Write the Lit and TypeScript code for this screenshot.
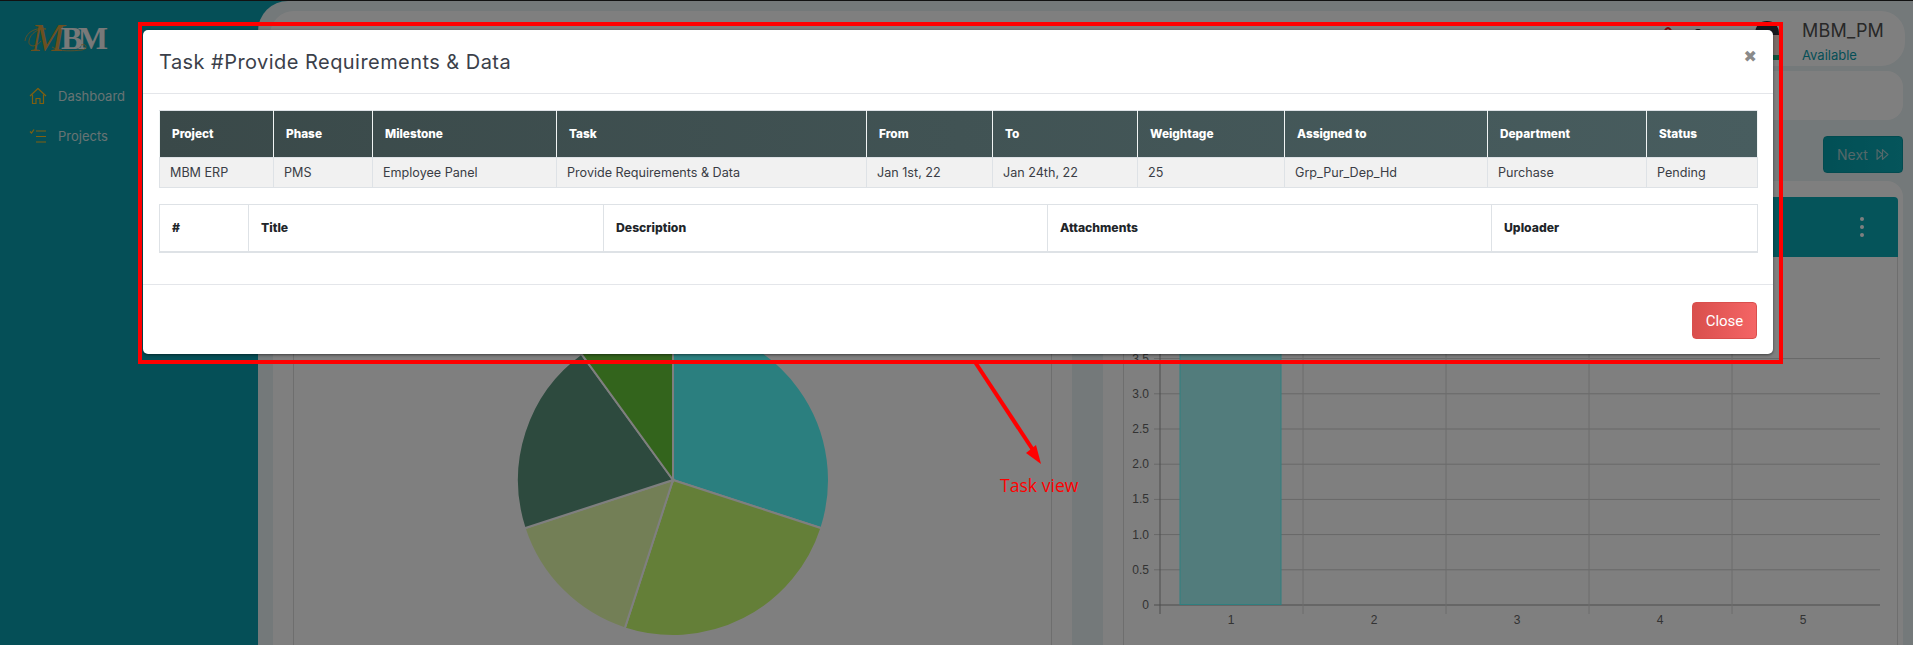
import { LitElement, html, css, svg } from 'lit';
import { customElement } from 'lit/decorators.js';

const TASK_COLS = ['Project', 'Phase', 'Milestone', 'Task', 'From', 'To', 'Weightage', 'Assigned to', 'Department', 'Status'];
const TASK_ROW = ['MBM ERP', 'PMS', 'Employee Panel', 'Provide Requirements & Data', 'Jan 1st, 22', 'Jan 24th, 22', '25', 'Grp_Pur_Dep_Hd', 'Purchase', 'Pending'];
const FILE_COLS = ['#', 'Title', 'Description', 'Attachments', 'Uploader'];

// share of the pie in percent, clockwise from 12 o'clock
const PIE = [
  { pct: 30, color: '#57ffff' },
  { pct: 25, color: '#c9ff70' },
  { pct: 15, color: '#e7ffad' },
  { pct: 20, color: '#5b957d' },
  { pct: 10, color: '#67c938' },
];

const Y_TICKS = [0, 0.5, 1, 1.5, 2, 2.5, 3, 3.5];
const X_TICKS = [1, 2, 3, 4, 5];
const ZERO_Y = 605;
const UNIT_Y = 70.4;
const AXIS_X = 1160;
const STEP_X = 143;

function piePaths(cx: number, cy: number, r: number) {
  let start = 0;
  return PIE.map((s) => {
    const end = start + (s.pct / 100) * Math.PI * 2;
    const x1 = cx + r * Math.sin(start);
    const y1 = cy - r * Math.cos(start);
    const x2 = cx + r * Math.sin(end);
    const y2 = cy - r * Math.cos(end);
    const large = end - start > Math.PI ? 1 : 0;
    start = end;
    return svg`<path d="M${cx} ${cy}L${x1} ${y1}A${r} ${r} 0 ${large} 1 ${x2} ${y2}Z" fill=${s.color} stroke="#fff" stroke-width="2" />`;
  });
}

@customElement('app-root')
export class AppRoot extends LitElement {
  static styles = css`
    :host {
      display: block;
      position: relative;
      width: 1913px;
      height: 645px;
      overflow: hidden;
      font-family: Inter, 'Liberation Sans', sans-serif;
      background: #0a9eae;
    }

    .page {
      display: flex;
      height: 645px;
      border-top: 1px solid #222;
      box-sizing: border-box;
    }

    .sidebar {
      width: 258px;
      flex-shrink: 0;
      padding: 24px 0 0 24px;
      box-sizing: border-box;
    }

    .logo {
      display: flex;
      align-items: center;
      height: 26px;
      position: relative;
      font-family: 'Liberation Serif', serif;
      line-height: 26px;
    }

    .logo-script {
      font-style: italic;
      font-size: 40px;
      color: #d9a040;
      width: 37px;
      padding-left: 7px;
      box-sizing: border-box;
    }

    .logo-solid {
      font-weight: 700;
      font-size: 32px;
      letter-spacing: -4.5px;
      color: #f2f2f2;
    }

    .logo-swirl {
      position: absolute;
      left: 0;
      top: 0;
      width: 82px;
      height: 28px;
    }

    .nav {
      margin-top: 34px;
      display: flex;
      flex-direction: column;
      gap: 19px;
    }

    .nav-item {
      display: flex;
      align-items: center;
      gap: 11px;
      height: 21px;
      padding-left: 5px;
      font-size: 13px;
      color: #cfe6e6;
    }

    .nav-item svg {
      width: 18px;
      height: 18px;
      color: #ffbf20;
      flex-shrink: 0;
    }

    .main {
      flex: 1;
      min-width: 0;
      background: #e8f2f4;
      border-top-left-radius: 30px;
      padding: 10px 10px 0 15px;
    }

    .topbar {
      height: 55px;
      margin: 0 -2px 5px -3px;
      background: #fff;
      border-radius: 24px;
      display: flex;
      align-items: center;
      padding-left: 13px;
      padding-right: 18px;
    }

    .search {
      width: 474px;
      height: 36px;
      margin-top: 18px;
      background: #f4f6f6;
      border-radius: 18px;
    }

    .top-actions {
      margin-left: auto;
      margin-top: 6px;
      display: flex;
      align-items: center;
    }

    .bell {
      width: 16px;
      height: 18px;
      margin-right: 16px;
      margin-bottom: 16px;
      color: #ff1a1a;
    }

    .gear {
      width: 12px;
      height: 14px;
      margin-right: 48px;
      margin-bottom: 13px;
      color: #222;
    }

    .avatar {
      width: 30px;
      height: 42px;
      margin-right: 20px;
    }

    .user {
      width: 85px;
    }

    .user-name {
      font-size: 18px;
      line-height: 26px;
      color: #505050;
      letter-spacing: 0.2px;
    }

    .user-state {
      font-size: 13px;
      line-height: 20px;
      color: #0a9eae;
      margin-top: 1px;
    }

    .subbar {
      height: 49px;
      margin: 0 0 16px -3px;
      background: #fff;
      border-radius: 16px;
    }

    .pager {
      display: flex;
      justify-content: flex-end;
      margin-bottom: 8px;
    }

    .next {
      width: 80px;
      height: 37px;
      display: flex;
      align-items: center;
      justify-content: center;
      gap: 8px;
      background: linear-gradient(90deg, #04a0ac, #0aaab6);
      border: 1px solid #0596a0;
      border-radius: 4px;
      box-sizing: border-box;
      color: #a8d0d3;
      font-size: 14px;
    }

    .next svg {
      width: 13px;
      height: 13px;
    }

    .cards {
      display: flex;
      gap: 31px;
    }

    .card {
      width: 799px;
      height: 480px;
      flex-shrink: 0;
      background: #fff;
      border-radius: 16px;
      padding: 16px 20px 0;
      box-sizing: border-box;
    }

    .card.wide {
      width: 800px;
      padding-right: 5px;
    }

    .card-head {
      height: 60px;
      background: #0aa8b4;
      border-radius: 4px 4px 0 0;
      display: flex;
      align-items: center;
      justify-content: flex-end;
      padding-right: 34px;
    }

    .dots {
      display: flex;
      flex-direction: column;
      gap: 4px;
    }

    .dots i {
      width: 4px;
      height: 4px;
      border-radius: 50%;
      background: #fff;
    }

    .card-body {
      height: 388px;
      border-left: 1px solid #dcdcdc;
      border-right: 1px solid #dcdcdc;
    }

    .card-body svg {
      display: block;
      width: 100%;
      height: 100%;
    }

    .tick {
      font-family: 'Liberation Sans', sans-serif;
      font-size: 12px;
      fill: #666;
    }

    .backdrop {
      position: absolute;
      inset: 0;
      background: rgba(0, 0, 0, 0.5);
    }

    .modal {
      position: absolute;
      left: 143px;
      top: 30px;
      width: 1630px;
      height: 324px;
      background: #fff;
      border-radius: 5px;
      box-shadow: 0 1px 3px rgba(0, 0, 0, 0.5);
    }

    .modal-head {
      height: 63px;
      display: flex;
      align-items: center;
      justify-content: space-between;
      padding: 1px 16px 0;
      box-sizing: content-box;
      border-bottom: 1px solid #e4e6ea;
      margin-top: -1px;
    }

    .modal-title {
      font-size: 20px;
      font-weight: 400;
      letter-spacing: 0.45px;
      color: #3b3f4a;
      margin: 0;
    }

    .modal-close {
      font-family: 'DejaVu Sans', sans-serif;
      font-size: 16px;
      font-weight: 700;
      color: #8a8a8a;
      line-height: 1;
      margin-top: -10px;
    }

    .modal-body {
      height: 191px;
      padding: 16px 16px 0;
      box-sizing: border-box;
      border-bottom: 1px solid #e4e6ea;
    }

    table {
      width: 1598px;
      table-layout: fixed;
      border-collapse: collapse;
      font-size: 12.6px;
    }

    th,
    td {
      text-align: left;
      padding: 0 0 0 12px;
      border: 1px solid #dee2e6;
      white-space: nowrap;
    }

    .task-table {
      margin-bottom: 16px;
    }

    .task-table thead tr {
      background: linear-gradient(90deg, #3a4949, #485d5f);
    }

    .task-table th {
      height: 47px;
      font-size: 11.8px;
      font-weight: 800;
      color: #fff;
      background: transparent;
      border-left-color: #f0f4f4;
      border-right-color: #f0f4f4;
      box-sizing: border-box;
    }

    .task-table td {
      height: 30px;
      color: #3a3d45;
      background: #f1f1f1;
      padding-left: 10px;
      box-sizing: border-box;
    }

    .task-table col:nth-child(1) { width: 114px; }
    .task-table col:nth-child(2) { width: 99px; }
    .task-table col:nth-child(3) { width: 184px; }
    .task-table col:nth-child(4) { width: 310px; }
    .task-table col:nth-child(5) { width: 126px; }
    .task-table col:nth-child(6) { width: 145px; }
    .task-table col:nth-child(7) { width: 147px; }
    .task-table col:nth-child(8) { width: 203px; }
    .task-table col:nth-child(9) { width: 159px; }
    .task-table col:nth-child(10) { width: 111px; }

    .file-table th {
      height: 47px;
      font-size: 12.2px;
      font-weight: 800;
      color: #212529;
      border-bottom-width: 2px;
      box-sizing: border-box;
    }

    .file-table col:nth-child(1) { width: 89px; }
    .file-table col:nth-child(2) { width: 355px; }
    .file-table col:nth-child(3) { width: 444px; }
    .file-table col:nth-child(4) { width: 444px; }
    .file-table col:nth-child(5) { width: 266px; }

    .modal-foot {
      display: flex;
      justify-content: flex-end;
      padding: 17px 16px 16px;
    }

    .btn-close {
      width: 65px;
      height: 37px;
      display: flex;
      align-items: center;
      justify-content: center;
      background: linear-gradient(90deg, #d94f4d, #f46565);
      border: 1px solid #d94f4d;
      border-radius: 4px;
      box-sizing: border-box;
      color: #fff;
      font-family: Roboto, 'Liberation Sans', sans-serif;
      font-size: 15px;
    }

    .mark-box {
      position: absolute;
      left: 138px;
      top: 22px;
      width: 1645px;
      height: 342px;
      border: 4px solid #f00;
      box-sizing: border-box;
    }

    .mark-arrow {
      position: absolute;
      left: 960px;
      top: 360px;
      width: 90px;
      height: 110px;
    }

    .mark-label {
      position: absolute;
      left: 1000px;
      top: 473px;
      font-family: 'Open Sans', sans-serif;
      font-size: 17.6px;
      line-height: 24px;
      color: #f00;
    }
  `;

  private renderSidebar() {
    return html`
      <aside class="sidebar">
        <div class="logo">
          <span class="logo-script">M</span>
          <span class="logo-solid">BM</span>
          <svg class="logo-swirl" viewBox="0 0 82 28" fill="none" stroke="#d9a040" stroke-width="0.8">
            <path d="M1 16C2 6 14 2 22 4C15 3 6 8 5 16C4 22 12 23 17 16" />
            <path d="M28 22C36 27 48 26 58 25C64 24 63 18 57 20" />
          </svg>
        </div>
        <nav class="nav">
          <div class="nav-item">
            <svg viewBox="0 0 18 18" fill="none" stroke="currentColor" stroke-width="1.2" stroke-linejoin="round">
              <path d="M1 9L9 1.5L17 9" />
              <path d="M3.5 7.5V16.5H7V11.5H11V16.5H14.5V7.5" />
            </svg>
            Dashboard
          </div>
          <div class="nav-item">
            <svg viewBox="0 0 18 18" fill="none" stroke="currentColor" stroke-width="1.2">
              <path d="M1 4.5L2.5 6L5 2.5" />
              <path d="M7 4H17M7 9.5H17M7 15H17" />
            </svg>
            Projects
          </div>
        </nav>
      </aside>
    `;
  }

  private renderTopbar() {
    return html`
      <header class="topbar">
        <div class="search"></div>
        <div class="top-actions">
          <svg class="bell" viewBox="0 0 16 18" fill="none" stroke="currentColor" stroke-width="2">
            <path d="M2 15C4 12 3 4 8 3C13 4 12 12 14 15Z" />
          </svg>
          <svg class="gear" viewBox="0 0 12 14" fill="currentColor">
            <circle cx="6" cy="6" r="5" />
          </svg>
          <svg class="avatar" viewBox="0 0 30 42">
            <rect x="4" y="8" width="23" height="28" fill="#f4d8d0" />
            <path d="M3 14C3 4 8 0 15 0C22 0 27 4 27 14Z" fill="#2a2f3a" />
            <rect x="4" y="34" width="26" height="5" fill="#1fa77c" />
          </svg>
          <div class="user">
            <div class="user-name">MBM_PM</div>
            <div class="user-state">Available</div>
          </div>
        </div>
      </header>
    `;
  }

  private renderPie() {
    return html`
      <div class="card-body">
        <svg viewBox="294 257 757 388">${piePaths(673, 480, 156)}</svg>
      </div>
    `;
  }

  private renderBars() {
    const y = (v: number) => ZERO_Y - v * UNIT_Y;
    return html`
      <div class="card-body">
        <svg viewBox="1124 257 773 388">
          ${Y_TICKS.map((v) => svg`
            <line x1="1154" x2="1880" y1=${y(v)} y2=${y(v)} stroke=${v === 0 ? '#999' : '#cfcfcf'} />
            <text class="tick" x="1149" y=${y(v) + 4} text-anchor="end">${v === 0 ? '0' : v.toFixed(1)}</text>
          `)}
          ${X_TICKS.map((v, i) => svg`
            <line x1=${AXIS_X + i * STEP_X} x2=${AXIS_X + i * STEP_X} y1="257" y2="614" stroke=${i === 0 ? '#999' : '#d8d8d8'} />
            <text class="tick" x=${AXIS_X + i * STEP_X + 71} y="624" text-anchor="middle">${v}</text>
          `)}
          <rect x="1180" y="257" width="101" height="347.5" fill="#a5f8f8" stroke="#5fffff" />
        </svg>
      </div>
    `;
  }

  private renderModal() {
    return html`
      <section class="modal">
        <div class="modal-head">
          <h2 class="modal-title">Task #Provide Requirements &amp; Data</h2>
          <span class="modal-close">✖</span>
        </div>
        <div class="modal-body">
          <table class="task-table">
            <colgroup>${TASK_COLS.map(() => html`<col />`)}</colgroup>
            <thead>
              <tr>${TASK_COLS.map((c) => html`<th>${c}</th>`)}</tr>
            </thead>
            <tbody>
              <tr>${TASK_ROW.map((c) => html`<td>${c}</td>`)}</tr>
            </tbody>
          </table>
          <table class="file-table">
            <colgroup>${FILE_COLS.map(() => html`<col />`)}</colgroup>
            <thead>
              <tr>${FILE_COLS.map((c) => html`<th>${c}</th>`)}</tr>
            </thead>
          </table>
        </div>
        <div class="modal-foot">
          <div class="btn-close">Close</div>
        </div>
      </section>
    `;
  }

  render() {
    return html`
      <div class="page">
        ${this.renderSidebar()}
        <main class="main">
          ${this.renderTopbar()}
          <div class="subbar"></div>
          <div class="pager">
            <div class="next">
              Next
              <svg viewBox="0 0 12 12" fill="none" stroke="currentColor" stroke-width="1.1" stroke-linejoin="round">
                <path d="M1 1.5L6 6L1 10.5Z" />
                <path d="M6 1.5L11 6L6 10.5Z" />
              </svg>
            </div>
          </div>
          <div class="cards">
            <div class="card">
              <div class="card-head"></div>
              ${this.renderPie()}
            </div>
            <div class="card wide">
              <div class="card-head">
                <div class="dots"><i></i><i></i><i></i></div>
              </div>
              ${this.renderBars()}
            </div>
          </div>
        </main>
      </div>
      <div class="backdrop"></div>
      ${this.renderModal()}
      <div class="mark-box"></div>
      <svg class="mark-arrow" viewBox="960 360 90 110">
        <line x1="975" y1="362" x2="1033" y2="450" stroke="#f00" stroke-width="4" />
        <polygon points="1041,464 1026,453 1036,445" fill="#f00" />
      </svg>
      <div class="mark-label">Task view</div>
    `;
  }
}

declare global {
  interface HTMLElementTagNameMap {
    'app-root': AppRoot;
  }
}
